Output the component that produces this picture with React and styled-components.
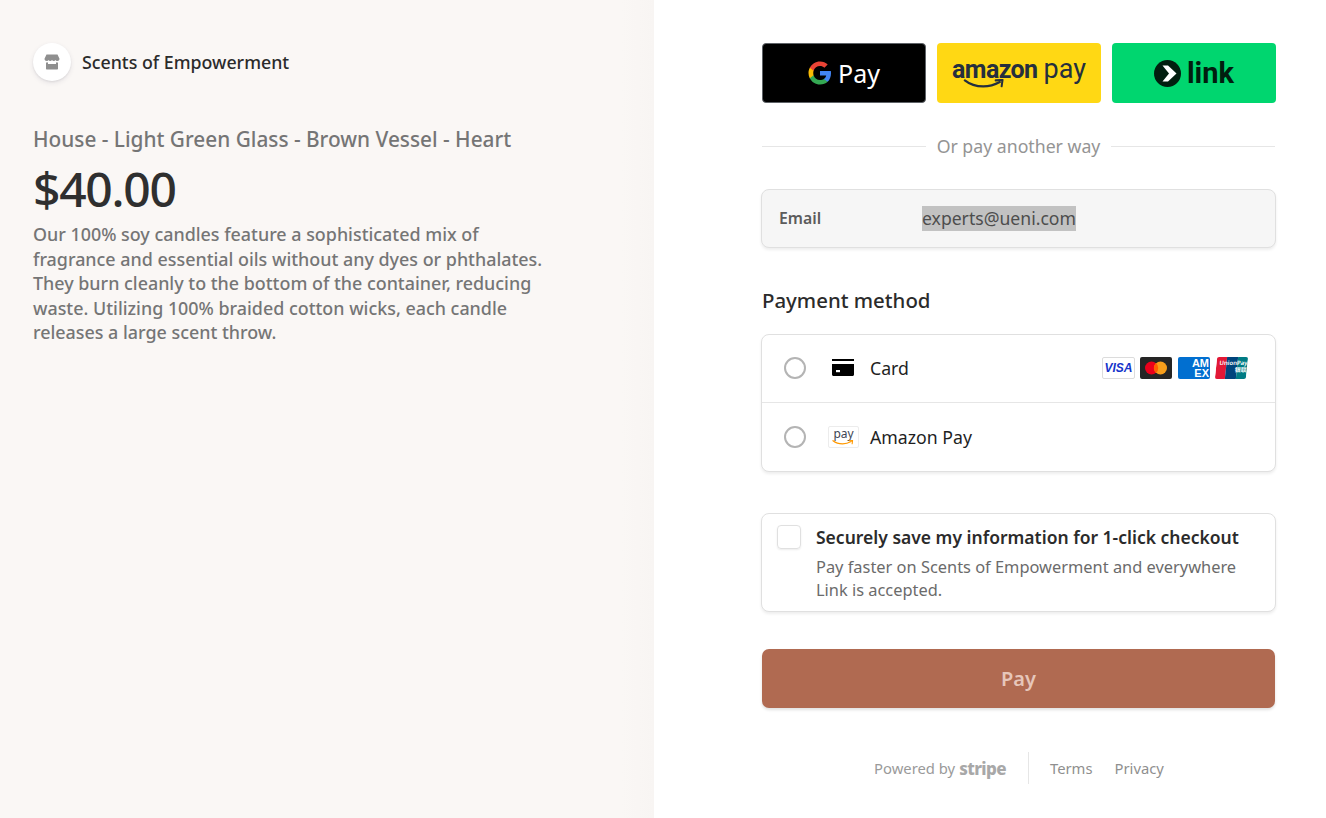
import styled, { createGlobalStyle } from 'styled-components';

const GlobalStyle = createGlobalStyle`
  html, body {
    margin: 0;
    padding: 0;
    background: #fff;
  }
  * {
    box-sizing: border-box;
  }
  body {
    font-family: "Noto Sans", "Open Sans", "Liberation Sans", sans-serif;
    color: #2a2a2a;
  }
`;

const GoogleG = () => (
  <svg width="24" height="24" viewBox="0 0 48 48">
    <path fill="#4285F4" d="M46 24.5c0-1.600-.1-3.100-.4-4.500H24v9h12.400c-.5 2.900-2.200 5.300-4.600 6.900v5.700h7.400C43.500 37.700 46 31.600 46 24.500z" />
    <path fill="#34A853" d="M24 47c6.200 0 11.400-2 15.200-5.500l-7.400-5.700c-2 1.400-4.700 2.200-7.800 2.200-6 0-11-4-12.800-9.500H3.600v5.900C7.400 41.900 15.100 47 24 47z" />
    <path fill="#FBBC04" d="M11.200 28.500c-.5-1.400-.7-2.900-.7-4.500s.3-3.100.7-4.500v-5.900H3.600C2 16.700 1 20.200 1 24s.9 7.300 2.600 10.400l7.600-5.900z" />
    <path fill="#EA4335" d="M24 10c3.400 0 6.400 1.200 8.800 3.400l6.600-6.600C35.400 3.200 30.200 1 24 1 15.100 1 7.400 6.100 3.600 13.600l7.600 5.900C13 14 18 10 24 10z" />
  </svg>
);

const LinkMark = () => (
  <svg width="27" height="27" viewBox="0 0 27 27">
    <circle cx="13.500" cy="13.500" r="13.500" fill="#011e0f" />
    <path fill="#fff" d="M8.500 5.500h5.500l8.500 8-8.500 8H8.500l6.500-8z" />
  </svg>
);

const StoreIcon = () => (
  <svg width="16" height="16" viewBox="0 0 16 16" fill="#8f8f8f">
    <path d="M2.500 0.500h11l2 4.200c0 1.300-1 2.300-2.200 2.300-.9 0-1.300-.4-1.700-1-.4.600-1.100 1-1.800 1s-1.400-.4-1.800-1c-.4.600-1.100 1-1.800 1s-1.400-.4-1.800-1c-.4.600-.8 1-1.700 1C1.500 7 .500 6 .500 4.700z" />
    <path d="M2 8.500c.6.100 1.300 0 2-.3v1.800h8V8.200c.7.300 1.400.4 2 .3v6c0 .6-.4 1-1 1H3c-.6 0-1-.4-1-1z" />
  </svg>
);

const CardIcon = () => (
  <svg width="22" height="17" viewBox="0 0 22 17">
    <path d="M0 0h22v2H0z" />
    <path d="M0 5h22v10.500c0 .8-.7 1.500-1.500 1.500h-19C.7 17 0 16.300 0 15.500z" />
    <path fill="#fff" d="M4 11h4v2.200H4z" />
  </svg>
);

const AmazonSmile = ({ width, color }) => (
  <svg width={width} height={width * 0.22} viewBox="0 0 50 11" style={{ display: 'block' }}>
    <path d="M2 1.500c6 4.800 13 6.600 20 6.600 6 0 12-1.500 18-4.800" fill="none" stroke={color} strokeWidth="2.400" strokeLinecap="round" />
    <path d="M35.500 1.500l7.500-.5-1 7" fill="none" stroke={color} strokeWidth="2.200" strokeLinecap="round" strokeLinejoin="round" />
  </svg>
);

export default function App() {
  return (
    <Page>
      <GlobalStyle />
      <Summary>
        <Merchant>
          <MerchantLogo>
            <StoreIcon />
          </MerchantLogo>
          <MerchantName>Scents of Empowerment</MerchantName>
        </Merchant>
        <ProductName>House - Light Green Glass - Brown Vessel - Heart</ProductName>
        <Price>$40.00</Price>
        <Description>
          Our 100% soy candles feature a sophisticated mix of fragrance and essential oils
          without any dyes or phthalates. They burn cleanly to the bottom of the container,
          reducing waste. Utilizing 100% braided cotton wicks, each candle releases a large
          scent throw.
        </Description>
      </Summary>

      <Checkout>
        <ExpressRow>
          <ExpressButton $bg="#000" $border="#5f6368">
            <GoogleG />
            <GPayText>Pay</GPayText>
          </ExpressButton>
          <ExpressButton $bg="#ffd814">
            <AmazonWord>
              amazon
              <SmileSlot>
                <AmazonSmile width={46} color="#252f3e" />
              </SmileSlot>
            </AmazonWord>
            <AmazonPayWord>pay</AmazonPayWord>
          </ExpressButton>
          <ExpressButton $bg="#00d66f">
            <LinkMark />
            <LinkWord>link</LinkWord>
          </ExpressButton>
        </ExpressRow>

        <Divider>
          <span>Or pay another way</span>
        </Divider>

        <EmailBox>
          <EmailLabel>Email</EmailLabel>
          <EmailValue>experts@ueni.com</EmailValue>
        </EmailBox>

        <SectionTitle>Payment method</SectionTitle>

        <MethodList>
          <MethodRow>
            <Radio />
            <MethodIcon>
              <CardIcon />
            </MethodIcon>
            <MethodName>Card</MethodName>
            <CardBrands>
              <Visa>VISA</Visa>
              <Mastercard>
                <svg width="26" height="16" viewBox="0 0 26 16">
                  <circle cx="8.500" cy="8" r="6.500" fill="#eb001b" />
                  <circle cx="17.500" cy="8" r="6.500" fill="#f79e1b" />
                  <path d="M13 3.100a6.500 6.500 0 0 1 0 9.800 6.500 6.500 0 0 1 0-9.800z" fill="#ff5f00" />
                </svg>
              </Mastercard>
              <Amex>
                <span>AM</span>
                <span>EX</span>
              </Amex>
              <UnionPay>
                <UnionStripes>
                  <i />
                  <i />
                  <i />
                </UnionStripes>
                <UnionText>
                  UnionPay
                  <br />
                  银联
                </UnionText>
              </UnionPay>
            </CardBrands>
          </MethodRow>
          <MethodRow $last>
            <Radio />
            <MethodIcon>
              <AmazonBadge>
                pay
                <AmazonSmile width={24} color="#ff9900" />
              </AmazonBadge>
            </MethodIcon>
            <MethodName>Amazon Pay</MethodName>
          </MethodRow>
        </MethodList>

        <SaveBox>
          <Checkbox />
          <SaveText>
            <SaveTitle>Securely save my information for 1-click checkout</SaveTitle>
            <SaveHint>
              Pay faster on Scents of Empowerment and everywhere Link is accepted.
            </SaveHint>
          </SaveText>
        </SaveBox>

        <PayButton>Pay</PayButton>

        <Footer>
          <Powered>
            Powered by <StripeWord>stripe</StripeWord>
          </Powered>
          <FooterLinks>
            <FooterLink>Terms</FooterLink>
            <FooterLink>Privacy</FooterLink>
          </FooterLinks>
        </Footer>
      </Checkout>
    </Page>
  );
}

const Page = styled.div`
  display: flex;
  width: 100%;
  height: 818px;
  overflow: hidden;
`;

const Summary = styled.section`
  width: 654px;
  flex: none;
  height: 100%;
  padding: 43px 33px 0;
  background: linear-gradient(to right, #faf7f5 95%, #f8f5f3 100%);
`;

const Merchant = styled.div`
  display: flex;
  align-items: center;
  gap: 11px;
`;

const MerchantLogo = styled.div`
  display: flex;
  align-items: center;
  justify-content: center;
  width: 38px;
  height: 38px;
  border-radius: 50%;
  background: #fff;
  box-shadow: 0 2px 5px rgba(50, 50, 93, 0.1), 0 1px 2px rgba(0, 0, 0, 0.07);
`;

const MerchantName = styled.span`
  font-size: 17.800px;
  line-height: 26px;
  font-weight: 500;
  color: #2b2b2b;
`;

const ProductName = styled.h1`
  margin: 43px 0 0;
  font-size: 20.800px;
  line-height: 30px;
  font-weight: 500;
  color: #757575;
  white-space: nowrap;
`;

const Price = styled.div`
  margin-top: 2px;
  font-size: 48px;
  line-height: 66px;
  font-weight: 500;
  letter-spacing: -1.300px;
  color: #2f2f2f;
`;

const Description = styled.p`
  margin: 0;
  width: 512px;
  font-size: 17.900px;
  line-height: 24.600px;
  font-weight: 500;
  color: #757575;
`;

const Checkout = styled.main`
  flex: 1;
  padding: 43px 0 0 108px;
  background: #fff;
`;

const ExpressRow = styled.div`
  display: flex;
  gap: 11px;
  width: 514px;
`;

const ExpressButton = styled.div`
  display: flex;
  align-items: center;
  justify-content: center;
  flex: 0 0 164px;
  height: 60px;
  border-radius: 4px;
  background: ${({ $bg }) => $bg};
  border: ${({ $border }) => ($border ? `1px solid ${$border}` : 'none')};
`;

const GPayText = styled.span`
  margin-left: 6px;
  font-size: 25px;
  line-height: 1;
  color: #fff;
`;

const AmazonWord = styled.span`
  position: relative;
  font-family: Roboto, sans-serif;
  font-size: 25px;
  font-weight: 700;
  line-height: 1;
  letter-spacing: -0.6px;
  color: #252f3e;
  margin-top: -7px;
`;

const SmileSlot = styled.span`
  position: absolute;
  left: 11px;
  top: 22px;
`;

const AmazonPayWord = styled.span`
  margin-left: 6px;
  font-family: Roboto, sans-serif;
  font-size: 27px;
  line-height: 1;
  color: #252f3e;
  margin-top: -7px;
`;

const LinkWord = styled.span`
  margin-left: 6px;
  font-family: Roboto, sans-serif;
  font-size: 29px;
  font-weight: 700;
  line-height: 1;
  color: #011e0f;
`;

const Divider = styled.div`
  display: flex;
  align-items: center;
  gap: 11px;
  width: 513px;
  margin-top: 32px;
  height: 22px;
  font-size: 17.700px;
  color: #949494;
  &::before,
  &::after {
    content: '';
    flex: 1;
    height: 1px;
    background: #e6e6e6;
  }
`;

const EmailBox = styled.div`
  display: flex;
  align-items: center;
  width: 515px;
  height: 59px;
  margin: 32px 0 0 -1px;
  padding-left: 17px;
  border: 1px solid #e0e0e0;
  border-radius: 8px;
  background: #f6f6f6;
  box-shadow: 0 2px 3px rgba(0, 0, 0, 0.07);
`;

const EmailLabel = styled.span`
  width: 143px;
  font-size: 15.800px;
  line-height: 22px;
  margin-top: -2px;
  font-weight: 600;
  color: #5c5c5c;
`;

const EmailValue = styled.span`
  font-size: 17.600px;
  line-height: 25px;
  color: #4d4d4d;
  background: #c2c2c2;
`;

const SectionTitle = styled.h2`
  margin: 37px 0 0;
  font-size: 20.400px;
  line-height: 30px;
  font-weight: 500;
  color: #2b2b2b;
`;

const MethodList = styled.div`
  width: 515px;
  margin: 19px 0 0 -1px;
  border: 1px solid #e0e0e0;
  border-radius: 8px;
  background: #fff;
  box-shadow: 0 2px 3px rgba(0, 0, 0, 0.07);
`;

const MethodRow = styled.div`
  display: flex;
  align-items: center;
  height: 68px;
  padding: 0 28px ${({ $last }) => ($last ? '0' : '2px')} 22px;
  border-bottom: ${({ $last }) => ($last ? 'none' : '1px solid #e6e6e6')};
`;

const Radio = styled.span`
  width: 22px;
  height: 22px;
  flex: none;
  border: 2px solid #b4b4b4;
  border-radius: 50%;
  background: #fff;
`;

const MethodIcon = styled.span`
  display: flex;
  justify-content: center;
  width: 32px;
  margin-left: 21px;
  flex: none;
`;

const MethodName = styled.span`
  margin-left: 11px;
  font-size: 17.700px;
  color: #1f1f1f;
`;

const CardBrands = styled.div`
  display: flex;
  align-items: center;
  gap: 6px;
  margin-left: auto;
`;

const BrandTile = styled.span`
  display: flex;
  align-items: center;
  justify-content: center;
  width: 32px;
  height: 22px;
  border-radius: 2px;
  overflow: hidden;
`;

const Visa = styled(BrandTile)`
  width: 33px;
  margin-right: -1px;
  background: #fff;
  border: 1px solid #dcdcdc;
  color: #1434cb;
  font-family: "Liberation Sans", sans-serif;
  font-size: 12px;
  font-weight: 700;
  font-style: italic;
`;

const Mastercard = styled(BrandTile)`
  background: #252525;
`;

const Amex = styled(BrandTile)`
  flex-direction: column;
  align-items: flex-end;
  background: #016fd0;
  color: #fff;
  font-family: "Liberation Sans", sans-serif;
  font-size: 11px;
  font-weight: 700;
  line-height: 10px;
  padding-right: 1px;
`;

const UnionPay = styled(BrandTile)`
  position: relative;
  width: 31px;
  transform: skewX(-6deg);
`;

const UnionStripes = styled.span`
  display: flex;
  width: 100%;
  height: 100%;
  i {
    flex: 1;
    background: #e21836;
  }
  i:nth-child(2) {
    background: #00447c;
  }
  i:nth-child(3) {
    background: #007b84;
  }
`;

const UnionText = styled.span`
  position: absolute;
  top: 3px;
  left: 0;
  right: 0;
  font-size: 6px;
  line-height: 7px;
  font-weight: 600;
  font-family: "Noto Sans", "Noto Sans CJK SC", sans-serif;
  text-align: right;
  color: #fff;
  white-space: nowrap;
`;

const AmazonBadge = styled.span`
  display: flex;
  flex-direction: column;
  align-items: center;
  justify-content: center;
  width: 31px;
  height: 22px;
  margin-left: 1px;
  border: 1px solid #ececec;
  border-radius: 2px;
  font-size: 12px;
  line-height: 12px;
  color: #3d4654;
`;

const SaveBox = styled.div`
  display: flex;
  gap: 15px;
  width: 515px;
  height: 99px;
  margin: 41px 0 0 -1px;
  padding: 11px 15px 0;
  border: 1px solid #e0e0e0;
  border-radius: 8px;
  background: #fff;
  box-shadow: 0 2px 3px rgba(0, 0, 0, 0.07);
`;

const Checkbox = styled.span`
  width: 24px;
  height: 24px;
  flex: none;
  border: 1px solid #e0e0e0;
  border-radius: 4px;
  box-shadow: 0 1px 2px rgba(0, 0, 0, 0.08);
`;

const SaveText = styled.div`
  display: flex;
  flex-direction: column;
`;

const SaveTitle = styled.div`
  font-size: 17.500px;
  line-height: 25px;
  font-weight: 600;
  color: #2b2b2b;
  white-space: nowrap;
`;

const SaveHint = styled.div`
  margin-top: 5px;
  font-size: 16.400px;
  line-height: 23px;
  color: #6b6b6b;
`;

const PayButton = styled.div`
  display: flex;
  align-items: center;
  justify-content: center;
  width: 513px;
  height: 59px;
  margin-top: 37px;
  border-radius: 7px;
  background: #b06a51;
  box-shadow: 0 2px 3px rgba(0, 0, 0, 0.12);
  color: #e6c6ba;
  font-size: 20px;
  font-weight: 600;
`;

const Footer = styled.footer`
  display: flex;
  align-items: center;
  justify-content: center;
  width: 514px;
  margin-top: 44px;
  height: 32px;
  font-size: 14.800px;
  color: #9a9a9a;
`;

const Powered = styled.div`
  display: flex;
  align-items: center;
  gap: 4px;
  height: 100%;
  padding-right: 22px;
  border-right: 1px solid #e6e6e6;
`;

const StripeWord = styled.span`
  font-size: 17px;
  font-weight: 800;
  letter-spacing: -0.6px;
  color: #a8a8a8;
`;

const FooterLinks = styled.div`
  display: flex;
  gap: 22px;
  padding-left: 21px;
`;

const FooterLink = styled.span`
  color: #8f8f8f;
`;
